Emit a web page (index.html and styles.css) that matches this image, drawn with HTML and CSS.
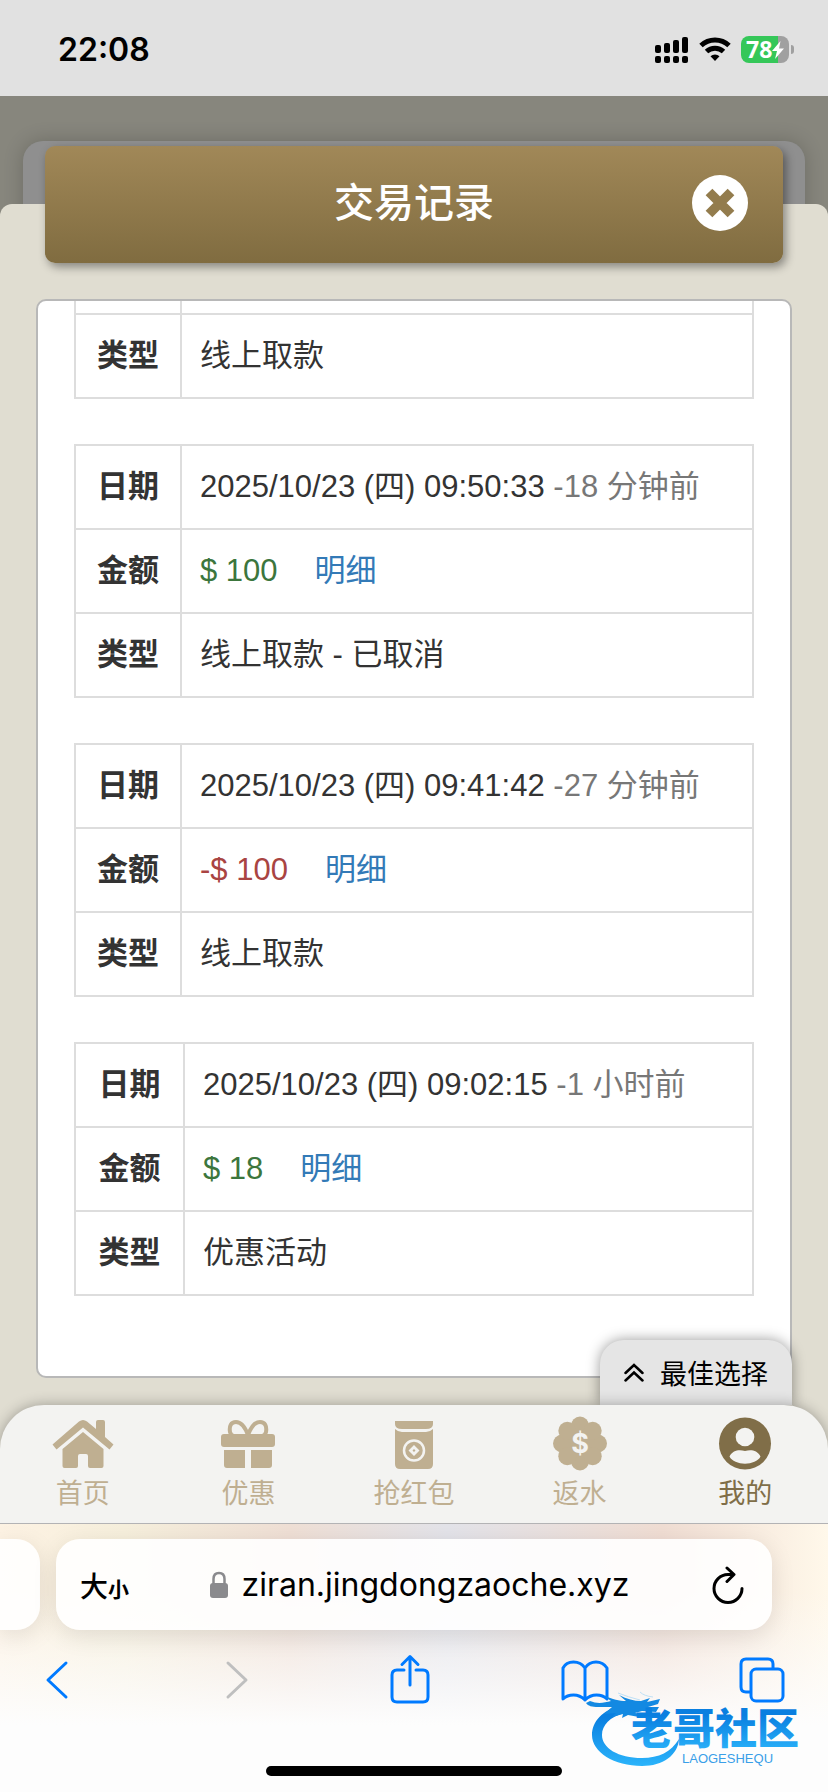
FILE: index.html
```html
<!DOCTYPE html>
<html lang="zh-CN">
<head>
    <meta charset="UTF-8">
    <meta name="viewport" content="width=device-width, initial-scale=1.0">
    <title>交易记录</title>
    <link rel="stylesheet" href="styles.css">
</head>
<body>
    <header class="status-bar">
        <span class="clock">22:08</span>
        <div class="status-icons">
            <svg width="34" height="28" viewBox="0 0 34 28">
                <rect x="0" y="9" width="6" height="8" rx="2"/>
                <rect x="9" y="7" width="6" height="10" rx="2"/>
                <rect x="18" y="4" width="6" height="13" rx="2"/>
                <rect x="27" y="1" width="6" height="16" rx="2"/>
                <rect x="0" y="20" width="6" height="7" rx="2"/>
                <rect x="9" y="20" width="6" height="7" rx="2"/>
                <rect x="18" y="20" width="6" height="7" rx="2"/>
                <rect x="27" y="20" width="6" height="7" rx="2"/>
            </svg>
            <svg width="32" height="28" viewBox="0 0 32 28">
                <path d="M2 9.500a20.500 20.500 0 0 1 28 0" fill="none" stroke="#000" stroke-width="5"/>
                <path d="M7.500 15.500a12.500 12.500 0 0 1 17 0" fill="none" stroke="#000" stroke-width="5"/>
                <path d="M16 25l-4.500-4.700a6.500 6.500 0 0 1 9 0z"/>
            </svg>
            <div class="battery">
                <span class="battery-level">78</span>
                <svg class="bolt" width="12" height="18" viewBox="0 0 12 18"><path d="M8.500 0L0 10h5l-2 8 9-10.500H7z" fill="#fff"/></svg>
            </div>
        </div>
    </header>

    <div class="backdrop">
        <div class="backdrop-card"></div>
    </div>

    <main class="sheet">
        <div class="sheet-header">
            <h1>交易记录</h1>
            <button class="close-btn" type="button" aria-label="关闭">
                <svg width="56" height="56" viewBox="0 0 56 56">
                    <circle cx="28" cy="28" r="28" fill="#fff"/>
                    <path d="M17 17l22 22M39 17L17 39" stroke="#937c4d" stroke-width="9.500"/>
                </svg>
            </button>
        </div>

        <section class="records">
            <table class="record">
                <tr class="cut-row"><th></th><td></td></tr>
                <tr><th scope="row">类型</th><td>线上取款</td></tr>
            </table>
            <table class="record">
                <tr><th scope="row">日期</th><td>2025/10/23 (四) 09:50:33 <span class="ago">-18 分钟前</span></td></tr>
                <tr><th scope="row">金额</th><td><span class="income">$ 100</span><a class="detail" href="#">明细</a></td></tr>
                <tr><th scope="row">类型</th><td>线上取款 - 已取消</td></tr>
            </table>
            <table class="record">
                <tr><th scope="row">日期</th><td>2025/10/23 (四) 09:41:42 <span class="ago">-27 分钟前</span></td></tr>
                <tr><th scope="row">金额</th><td><span class="expense">-$ 100</span><a class="detail" href="#">明细</a></td></tr>
                <tr><th scope="row">类型</th><td>线上取款</td></tr>
            </table>
            <table class="record wide">
                <tr><th scope="row">日期</th><td>2025/10/23 (四) 09:02:15 <span class="ago">-1 小时前</span></td></tr>
                <tr><th scope="row">金额</th><td><span class="income">$ 18</span><a class="detail" href="#">明细</a></td></tr>
                <tr><th scope="row">类型</th><td>优惠活动</td></tr>
            </table>
        </section>

        <div class="bottom">
            <button class="best-choice" type="button">
                <svg width="20" height="20" viewBox="0 0 20 20" fill="none" stroke="#000" stroke-width="2.500" stroke-linecap="round"><path d="M1.500 10L10 2l8.500 8M1.500 17.500L10 9.500l8.500 8"/></svg>
                最佳选择
            </button>
            <nav class="tab-bar">
                <a href="#">
                    <svg width="64" height="56" viewBox="0 0 64 56">
                        <path d="M1.500 29.500L28 6.500q4-3 8 0l9 7.500V7q0-2 2-2h5q2 0 2 2v15l8.500 7.500-4 5L32 12.500 5.500 34.500z"/>
                        <path d="M32 17L52.500 34v17q0 2-2 2H39q-2 0-2-2V41q0-2-2-2h-6q-2 0-2 2v10q0 2-2 2H13.500q-2 0-2-2V34z"/>
                    </svg>
                    首页
                </a>
                <a href="#">
                    <svg width="64" height="56" viewBox="0 0 64 56">
                        <path d="M32 20c-3-8-7-13-12-13s-7 4-6 10q1 4 4 4h28q3 0 4-4c1-6-1-10-6-10S35 12 32 20z" fill="none" stroke="#bfaf91" stroke-width="4"/>
                        <rect x="5" y="19" width="54" height="13" rx="3"/>
                        <path d="M8 35h21v18H11q-3 0-3-3zM35 35h21v15q0 3-3 3H35z"/>
                    </svg>
                    优惠
                </a>
                <a href="#">
                    <svg width="64" height="56" viewBox="0 0 64 56">
                        <path d="M13 6h38v3q0 5-7 5H20q-7 0-7-5z"/>
                        <path d="M13 14q3 3 7 3h24q4 0 7-3v35q0 5-5 5H18q-5 0-5-5z"/>
                        <circle cx="32" cy="35.500" r="10" fill="none" stroke="#f3f3f1" stroke-width="2.500"/>
                        <path d="M32 30l5.500 5.500L32 41l-5.500-5.500zM32 34l-1.500 1.500 1.500 1.500 1.500-1.500z" fill="#f3f3f1" fill-rule="evenodd"/>
                    </svg>
                    抢红包
                </a>
                <a href="#">
                    <svg width="64" height="56" viewBox="0 0 64 56">
                        <circle cx="32" cy="28.500" r="20"/>
                        <circle cx="32" cy="10.500" r="9"/><circle cx="32" cy="46.500" r="9"/>
                        <circle cx="14" cy="28.500" r="9"/><circle cx="50" cy="28.500" r="9"/>
                        <circle cx="19.300" cy="15.800" r="9"/><circle cx="44.700" cy="15.800" r="9"/>
                        <circle cx="19.300" cy="41.200" r="9"/><circle cx="44.700" cy="41.200" r="9"/>
                        <text class="coin" x="32" y="38" text-anchor="middle">$</text>
                    </svg>
                    返水
                </a>
                <a class="active" href="#">
                    <svg width="64" height="56" viewBox="0 0 64 56">
                        <circle cx="32" cy="28.500" r="26"/>
                        <circle cx="32" cy="22" r="9.300" fill="#f3f3f1"/>
                        <path d="M16.500 41.500C20 35 26 34.500 32 36c6-1.500 12-1 15.500 5.500C43 51 21 51 16.500 41.500z" fill="#f3f3f1"/>
                    </svg>
                    我的
                </a>
            </nav>
        </div>
    </main>

    <footer class="browser-bar">
        <div class="address-row">
            <div class="prev-tab"></div>
            <div class="address">
                <button class="text-size" type="button">大<small>小</small></button>
                <label class="url">
                    <svg width="18" height="28" viewBox="0 0 18 28">
                        <rect y="12" width="18" height="15" rx="3" fill="#8a8a8d"/>
                        <path d="M3.500 13V8q0-6 5.500-6t5.500 6v5" fill="none" stroke="#8a8a8d" stroke-width="2.500"/>
                    </svg>
                    <input type="text" value="ziran.jingdongzaoche.xyz" aria-label="网址">
                </label>
                <button class="reload" type="button" aria-label="刷新">
                    <svg width="32" height="38" viewBox="0 0 32 38" fill="none" stroke="#000" stroke-width="3" stroke-linecap="round" stroke-linejoin="round">
                        <path d="M21.500 8.500H16A14 14 0 1 0 30 22.500M15 2l7 6.500-7 7"/>
                    </svg>
                </button>
            </div>
        </div>

        <div class="toolbar">
            <button type="button" aria-label="后退">
                <svg width="48" height="50" viewBox="0 0 48 50"><path d="M33 9L15 26l18 17"/></svg>
            </button>
            <button class="off" type="button" aria-label="前进">
                <svg width="48" height="50" viewBox="0 0 48 50"><path d="M19 9l18 17-18 17"/></svg>
            </button>
            <button type="button" aria-label="分享">
                <svg width="48" height="50" viewBox="0 0 48 50"><path d="M19 16h-7q-5 0-5 5v22q0 5 5 5h26q5 0 5-5V21q0-5-5-5h-7M25 31V3M17 10.500l8-8 8 8"/></svg>
            </button>
            <button type="button" aria-label="书签">
                <svg width="48" height="50" viewBox="0 0 48 50"><path d="M24 14Q20 8 12.500 8T2 14v31q4-4 10.500-4T24 46q5-5 11.500-5T46 45V14q-4-6-11-6t-11 6zv32"/></svg>
            </button>
            <button type="button" aria-label="标签页">
                <svg width="48" height="50" viewBox="0 0 48 50"><rect x="14" y="15" width="32" height="32" rx="5"/><path d="M13 38H9q-5 0-5-5V10q0-5 5-5h22q5 0 5 5v4"/></svg>
            </button>
        </div>

        <div class="home-indicator"></div>

        <svg class="watermark" width="248" height="84" viewBox="0 0 248 84">
            <defs>
                <linearGradient id="blue" x1="0" y1="0" x2="0" y2="1">
                    <stop offset="0.200" stop-color="#0a7fe0"/>
                    <stop offset="1" stop-color="#2bb4fb"/>
                </linearGradient>
            </defs>
            <g fill="url(#blue)">
                <path d="M42 15C22 20 12 32 12 45c0 17 22 31 50 31 21 0 36-11 37-27-8 13-20 19-37 19-24 0-40-10-40-23 0-10 8-18 22-22z"/>
                <path d="M10 11c7 3 14 2 21 0l-7-5c9 3 15 5 22 5l-7-6c8 4 15 6 22 6l9-3-3 4 13-3-2 5-10 3h11l-3 5-14-1-7 2 9 1-5 3-11-2-6 3 1-4-11 3 4-4-12 1 8-7-14 0c-6 0-10-1-12-4z" fill="#1389e2"/>
                <path d="M38 3q10 4 22 7M60 2q4 4 13 5" fill="none" stroke="#bfe0f5"/>
                <text class="brand" x="51" y="54">老哥社区</text>
            </g>
            <text class="brand-latin" x="102" y="73">LAOGESHEQU</text>
        </svg>
    </footer>
</body>
</html>
```
FILE: styles.css
```css
/* Reset default styles */
* {
    margin: 0;
    padding: 0;
    box-sizing: border-box;
}

body {
    background: #87867d;
    color: #333;
    font-family: 'Liberation Sans', 'Noto Sans CJK SC', sans-serif;
    display: flex;
    flex-direction: column;
    height: 100vh;
    overflow: hidden;
}

button {
    border: none;
    background: none;
    font-family: inherit;
    color: #000;
    cursor: pointer;
}

svg {
    display: block;
    flex: none;
}

a {
    text-decoration: none;
}

/* Status bar */
.status-bar {
    flex: none;
    height: 96px;
    padding: 3px 34px 0 58px;
    background: #e1e1e1;
    display: flex;
    align-items: center;
    justify-content: space-between;
}

.clock {
    font-family: Inter, sans-serif;
    font-size: 32px;
    font-weight: 600;
    color: #000;
}

.status-icons {
    display: flex;
    align-items: center;
    gap: 10px;
}

.battery {
    position: relative;
    display: flex;
    align-items: center;
    width: 48px;
    height: 27px;
    padding-left: 5px;
    margin-right: 5px;
    border-radius: 8px;
    background: linear-gradient(90deg, #35c759 78%, #a0a0a0 78%);
}

.battery::after {
    content: '';
    position: absolute;
    right: -5px;
    top: 9px;
    width: 3px;
    height: 9px;
    border-radius: 0 4px 4px 0;
    background: #a0a0a0;
}

.battery-level {
    font-family: 'Open Sans', sans-serif;
    font-size: 23px;
    line-height: 27px;
    font-weight: 700;
    color: #fff;
}

/* Dimmed page behind the sheet */
.backdrop {
    flex: none;
    height: 108px;
    padding: 45px 23px 0;
}

.backdrop-card {
    height: 80px;
    border-radius: 20px 20px 0 0;
    background: #8f8f8f;
    box-shadow: 0 0 20px rgba(0, 0, 0, 0.2);
}

/* Sheet */
.sheet {
    position: relative;
    flex: 1;
    min-height: 0;
    display: flex;
    flex-direction: column;
    background: #e0ddd1;
    border-radius: 12px 12px 0 0;
}

.sheet-header {
    flex: none;
    display: grid;
    grid-template-columns: 1fr auto 1fr;
    align-items: center;
    height: 117px;
    margin: -58px 45px 36px;
    padding: 0 35px 4px;
    border-radius: 10px;
    background: linear-gradient(#a18858, #806c40);
    box-shadow: 3px 4px 10px rgba(0, 0, 0, 0.4);
}

.sheet-header h1 {
    grid-column: 2;
    font-size: 40px;
    line-height: 56px;
    font-weight: 500;
    color: #fff;
}

.close-btn {
    justify-self: end;
}

/* Record list, scrolled to its end */
.records {
    flex: 1;
    min-height: 0;
    display: flex;
    flex-direction: column;
    justify-content: flex-end;
    gap: 45px;
    margin: 0 36px 27px;
    padding: 0 36px 80px;
    overflow: hidden;
    background: #fff;
    border: 2px solid #b8b8b8;
    border-radius: 10px;
}

.record {
    flex: none;
    width: 100%;
    table-layout: fixed;
    border-collapse: collapse;
    font-size: 31px;
    line-height: 40px;
}

.record th,
.record td {
    height: 84px;
    border: 2px solid #ddd;
    vertical-align: middle;
}

.record th {
    width: 106px;
    font-weight: 700;
}

.record.wide th {
    width: 109px;
}

.record td {
    padding-left: 18px;
    white-space: nowrap;
}

.ago {
    color: #777;
}

.income {
    color: #3c763d;
}

.expense {
    color: #a94442;
}

.detail {
    margin-left: 37px;
    color: #337ab7;
}

/* Bottom navigation */
.bottom {
    position: relative;
    flex: none;
}

.best-choice {
    position: absolute;
    right: 36px;
    bottom: 100%;
    display: flex;
    align-items: center;
    justify-content: center;
    gap: 16px;
    width: 192px;
    height: 65px;
    border-radius: 24px 24px 0 0;
    background: #e5e5e5;
    box-shadow: 0 0 14px rgba(0, 0, 0, 0.4);
    font-size: 27px;
}

.tab-bar {
    position: relative;
    display: grid;
    grid-template-columns: repeat(5, 1fr);
    padding: 10px 0 9px;
    background: #f3f3f1;
    border-radius: 44px 44px 0 0;
    box-shadow: 0 0 14px rgba(0, 0, 0, 0.3);
}

.tab-bar a {
    display: flex;
    flex-direction: column;
    align-items: center;
    gap: 3px;
    font-size: 27px;
    line-height: 40px;
    color: #bfaf91;
    fill: #bfaf91;
}

.tab-bar .active {
    color: #806e48;
    fill: #806e48;
}

.coin {
    font-family: Inter, sans-serif;
    font-size: 27px;
    font-weight: 700;
    fill: #f3f3f1;
}

/* Browser controls */
.browser-bar {
    position: relative;
    z-index: 1;
    flex: none;
    padding: 15px 0 16px;
    border-top: 1px solid #b3b3b5;
    background:
        linear-gradient(rgba(253, 253, 253, 0) 25%, #fdfdfd 75%),
        linear-gradient(90deg, #fdf2e3, #f6efdc 15%, #efdfd5 35%, #e3e3e9 54%, #f0ddd3 80%, #fff8ea);
}

.address-row {
    display: flex;
    gap: 16px;
    padding-right: 56px;
}

.prev-tab {
    width: 40px;
    border-radius: 0 24px 24px 0;
    background: rgba(255, 255, 255, 0.9);
    box-shadow: 0 6px 24px rgba(0, 0, 0, 0.1);
}

.address {
    flex: 1;
    display: flex;
    align-items: center;
    justify-content: space-between;
    height: 91px;
    padding: 0 28px 0 24px;
    border-radius: 24px;
    background: rgba(255, 255, 255, 0.9);
    box-shadow: 0 6px 24px rgba(0, 0, 0, 0.1);
}

.text-size {
    font-size: 28px;
    font-weight: 500;
}

.text-size small {
    font-size: 21px;
    font-weight: 700;
}

.url {
    display: flex;
    align-items: center;
    gap: 14px;
}

.url input {
    width: 390px;
    border: none;
    outline: none;
    background: none;
    font-family: Inter, sans-serif;
    font-size: 32px;
    color: #000;
}

.toolbar {
    display: flex;
    justify-content: space-between;
    margin: 24px 43px 62px 33px;
    fill: none;
    stroke: #007aff;
    stroke-width: 3;
    stroke-linecap: round;
    stroke-linejoin: round;
}

.toolbar .off {
    stroke: #bfbfbf;
}

.home-indicator {
    width: 296px;
    height: 10px;
    margin: 0 auto;
    border-radius: 5px;
    background: #000;
}

/* Community logo over the toolbar */
.watermark {
    position: absolute;
    right: 0;
    bottom: 18px;
    pointer-events: none;
}

.brand {
    font-size: 42px;
    font-weight: 900;
}

.brand-latin {
    font-size: 13px;
    fill: #3a9fe8;
}
```
